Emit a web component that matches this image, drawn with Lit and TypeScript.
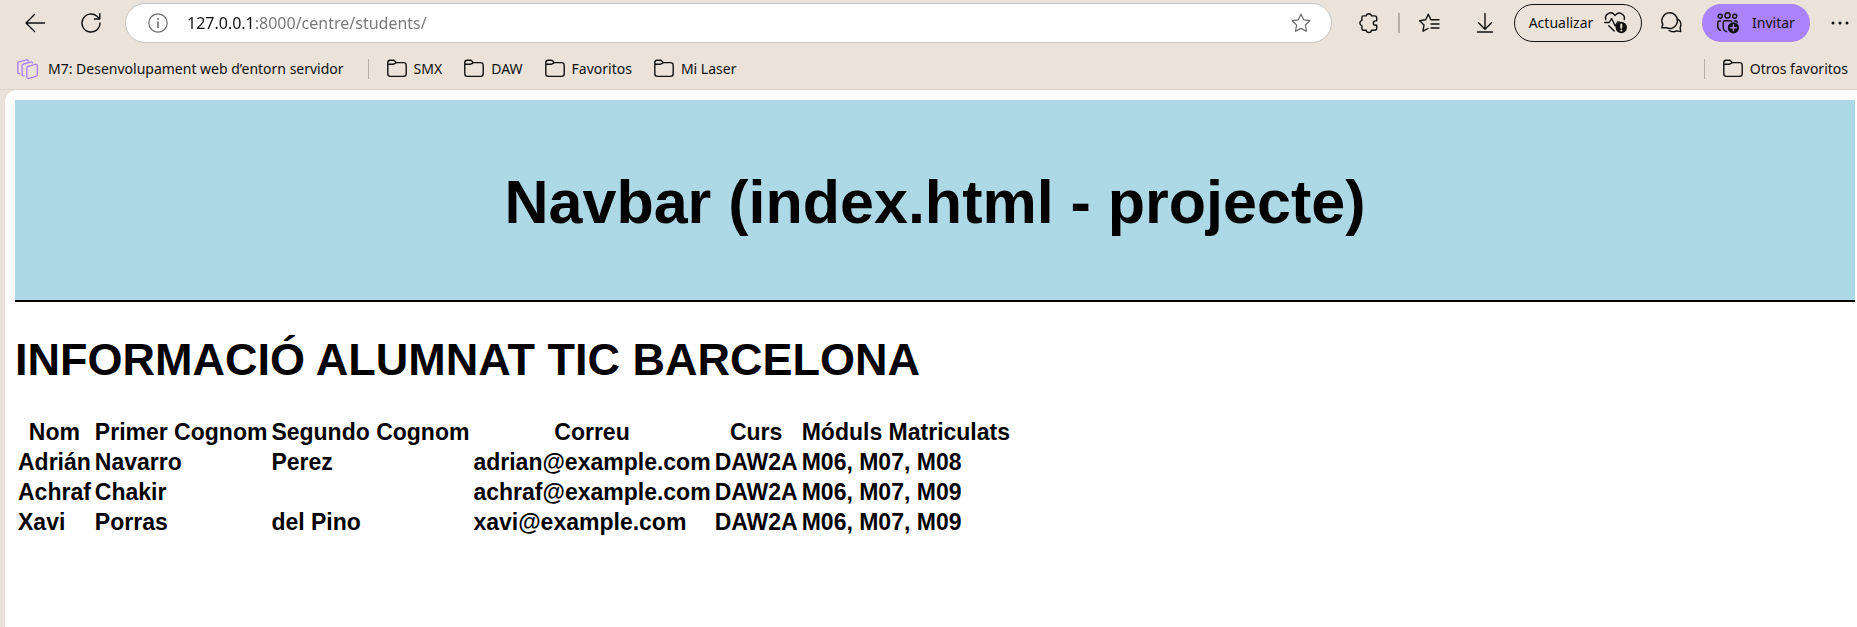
import { LitElement, html, css, svg } from "lit";
import { customElement } from "lit/decorators.js";

const folder = html`<svg class="icon" viewBox="0 0 20 20" aria-hidden="true">
  <path d="M.8 4.200v10.600a2.600 2.600 0 0 0 2.600 2.600h13.200a2.600 2.600 0 0 0 2.600-2.600V6.200a2.600 2.600 0 0 0-2.600-2.600H9.200L7.600 1.800a2 2 0 0 0-1.400-.6H3.200A2.400 2.400 0 0 0 .8 3.600zM.8 5.200h5.600a2 2 0 0 0 1.400-.6l1.400-1"/>
</svg>`;

const starPath = "M10 1.200l2.700 5.600 6.100.9-4.400 4.300 1.100 6.200L10 15.400l-5.500 2.800 1.100-6.200L1.200 7.700l6.100-.9z";

const icons = {
  back: svg`<path d="M19.500 10H1M9.500 1.500L1 10l8.500 8.500"/>`,
  reload: svg`<path d="M19 10a9 9 0 1 1-3-6.700L18.600 6M18.800 .6V6H13.400"/>`,
  info: svg`<circle cx="10" cy="10" r="9.200"/><path d="M10 9v5.500M10 5.600v.6" stroke-width="1.600"/>`,
  star: svg`<path d=${starPath}/>`,
  puzzle: svg`<path d="M7.200 2.900a2.700 2.700 0 0 1 5.300 0h3.200a2 2 0 0 1 2 2v3h-1.200a2.200 2.200 0 0 0 0 4.400h1.200v3a2 2 0 0 1-2 2h-3.200a2.700 2.700 0 0 1-5.300 0H4.400a1.500 1.500 0 0 1-1.500-1.500v-3a2.800 2.800 0 0 1 0-5.400v-3a1.500 1.500 0 0 1 1.500-1.500z"/>`,
  favorites: svg`<path d="M12.500 6.800h-.6L9.300 1.200 6.700 6.800l-6 .9L5 12l-1 6.200 5-2.700M12.500 6.800H20M12 11h8M12 15h8"/>`,
  download: svg`<path d="M10 .5V16M3.500 9.800l6.500 6.500 6.500-6.500M2.500 19h15"/>`,
  chat: svg`<path d="M.8 14.800l1-3.500a7.800 7.800 0 1 1 3.400 3.300zM17.600 6.600a7.200 7.200 0 0 1 1.500 8.200l.7 3.800-4.100-.7a8 8 0 0 1-7.600-.4"/>`,
};

const students = [
  ["Adrián", "Navarro", "Perez", "adrian@example.com", "DAW2A", "M06, M07, M08"],
  ["Achraf", "Chakir", "", "achraf@example.com", "DAW2A", "M06, M07, M09"],
  ["Xavi", "Porras", "del Pino", "xavi@example.com", "DAW2A", "M06, M07, M09"],
];
const columns = ["Nom", "Primer Cognom", "Segundo Cognom", "Correu", "Curs", "Móduls Matriculats"];

@customElement("app-root")
export class AppRoot extends LitElement {
  static styles = css`
    :host {
      display: flex;
      flex-direction: column;
      min-height: 100vh;
      background: #ebe2d9;
      color: #111;
      font: 14px/20px "Noto Sans", "Open Sans", sans-serif;
    }
    button {
      font: inherit;
      color: inherit;
      background: none;
      border: 0;
      padding: 0;
      cursor: pointer;
    }
    .icon {
      display: block;
      width: 20px;
      height: 20px;
      flex: none;
      fill: none;
      stroke: currentColor;
      stroke-width: 1.4;
      stroke-linecap: round;
      stroke-linejoin: round;
      overflow: visible;
    }
    .icon.wide {
      width: 23px;
      height: 22px;
    }
    .solid {
      fill: #111;
      stroke: none;
    }
    .toolbar {
      display: flex;
      align-items: center;
      gap: 2px;
      padding: 3px 0 0 8px;
    }
    .tool {
      width: 54px;
      height: 38px;
      flex: none;
      display: grid;
      place-items: center;
    }
    .more {
      width: 45px;
      justify-content: end;
      padding-right: 7px;
    }
    .address {
      flex: 1;
      min-width: 0;
      display: flex;
      align-items: center;
      box-sizing: border-box;
      height: 40px;
      margin: 0 8px 0 5px;
      padding: 0 20px 0 22px;
      background: #fff;
      border: 1px solid #c6c6c6;
      border-radius: 20px;
      color: #6b6b6b;
    }
    .address .icon {
      stroke-width: 1.2;
    }
    .url {
      flex: 1;
      min-width: 0;
      height: 24px;
      margin: 0 19px;
      padding: 0;
      border: 0;
      outline: 0;
      font: 16px/24px "Noto Sans", "Open Sans", sans-serif;
      background: linear-gradient(90deg, #111 67px, #767676 67px);
      -webkit-background-clip: text;
      background-clip: text;
      color: transparent;
    }
    .split {
      width: 2px;
      height: 20px;
      background: #b8afa7;
    }
    .pill {
      display: flex;
      align-items: center;
      justify-content: center;
      box-sizing: border-box;
      height: 38px;
      border-radius: 19px;
      flex: none;
    }
    .update {
      width: 128px;
      gap: 11px;
      border: 1px solid #111;
    }
    .invite {
      width: 108px;
      margin-left: 2px;
      gap: 12px;
      background: #ab82ff;
    }
    .update .mark {
      stroke: #ebe2d9;
      stroke-width: 2;
    }
    .invite .mark {
      stroke: #ab82ff;
    }
    .bookmarks {
      display: flex;
      align-items: center;
      height: 40px;
      padding: 6px 9px 0 17px;
      gap: 22px;
      border-bottom: 1px solid #ddd4cc;
    }
    .bookmark {
      display: flex;
      align-items: center;
      gap: 7px;
      color: inherit;
      text-decoration: none;
      white-space: nowrap;
    }
    .course {
      gap: 10px;
    }
    .course .icon {
      color: #ab82f4;
      width: 21px;
    }
    .line {
      width: 1px;
      height: 20px;
      background: #b8afa7;
    }
    .bookmarks > .line {
      margin: 0 -4px 0 2px;
    }
    .other {
      margin-left: auto;
      display: flex;
      align-items: center;
      gap: 18px;
    }
    .page {
      flex: 1;
      margin-left: 5px;
      padding: 10px 2px 0 10px;
      background: #fff;
      border-top-left-radius: 12px;
      color: #000;
      font-family: "Arial Rounded MT Bold", "Liberation Sans", Arial, sans-serif;
      font-weight: 700;
      font-size: 23px;
      line-height: 26px;
    }
    .banner {
      box-sizing: border-box;
      display: grid;
      place-items: center;
      height: 202px;
      padding-top: 4px;
      background: #add8e6;
      border-bottom: 2px solid #000;
    }
    .banner h1 {
      margin: 0;
      font-size: 61px;
      line-height: 70px;
    }
    h2 {
      margin: 31px 0 29px;
      font-size: 45px;
      line-height: 54px;
    }
    table {
      border-collapse: separate;
      border-spacing: 2px;
    }
    th,
    td {
      padding: 1px;
      text-align: left;
      white-space: nowrap;
    }
    th {
      text-align: center;
    }
  `;

  private tool(label: string, icon: unknown) {
    return html`<button class="tool" aria-label=${label}><svg class="icon" viewBox="0 0 20 20">${icon}</svg></button>`;
  }

  private bookmark(label: string) {
    return html`<a class="bookmark" href="#">${folder}${label}</a>`;
  }

  render() {
    return html`
      <div class="toolbar">
        ${this.tool("Atrás", icons.back)} ${this.tool("Actualizar página", icons.reload)}
        <div class="address">
          <svg class="icon" viewBox="0 0 20 20" aria-hidden="true">${icons.info}</svg>
          <input class="url" aria-label="Dirección" value="127.0.0.1:8000/centre/students/" />
          <button aria-label="Agregar a favoritos"><svg class="icon" viewBox="0 0 20 20">${icons.star}</svg></button>
        </div>
        ${this.tool("Extensiones", icons.puzzle)}
        <span class="split"></span>
        ${this.tool("Favoritos", icons.favorites)} ${this.tool("Descargas", icons.download)}
        <button class="pill update">
          Actualizar
          <svg class="icon wide" viewBox="0 0 23 22" aria-hidden="true">
            <path d="M1.800 7.500a5 5 0 0 1 8.700-4.600l.5.600.6-.6a5 5 0 0 1 8.600 4.600M.8 10.500h4.400l2.400-4 3.600 7.500 2.400-4h1.600M4.800 13.800l5.400 5.200" />
            <circle class="solid" cx="17.300" cy="15.500" r="5.700" />
            <path class="mark" d="M17.300 12.600v3.200M17.300 18.400v.1" />
          </svg>
        </button>
        ${this.tool("Comentarios", icons.chat)}
        <button class="pill invite">
          <svg class="icon wide" viewBox="0 0 23 22" aria-hidden="true">
            <circle cx="3.200" cy="4.200" r="2" />
            <circle cx="10.500" cy="3.400" r="2.600" />
            <circle cx="17.800" cy="4.200" r="2" />
            <path d="M3.600 9H2.200A1.400 1.400 0 0 0 .8 10.400v4.200a4 4 0 0 0 2.600 3.700M9.600 19.600A4.600 4.600 0 0 1 6.200 15.200v-4.800A1.600 1.600 0 0 1 7.800 8.800h5.400a1.600 1.600 0 0 1 1.500 1M17.400 9h1.400a1.400 1.400 0 0 1 1.400 1.400" />
            <circle class="solid" cx="16.400" cy="15.800" r="5.600" />
            <path class="mark" d="M13.400 15.800h6M16.400 12.800v6" />
          </svg>
          Invitar
        </button>
        <button class="tool more" aria-label="Más opciones">
          <svg class="icon" viewBox="0 0 20 20"><path d="M3 10h0M10 10h0M17 10h0" stroke-width="3" /></svg>
        </button>
      </div>
      <nav class="bookmarks">
        <a class="bookmark course" href="#">
          <svg class="icon" viewBox="0 0 21 20" aria-hidden="true">
            <path d="M11.300 7.300l7-2a1.500 1.500 0 0 1 2 1.500v8.600a2 2 0 0 1-1.500 2l-7 2a1.500 1.500 0 0 1-2-1.500V9.300a2 2 0 0 1 1.500-2zM7 16.800a1.500 1.500 0 0 1-1.900-1.400V7a2 2 0 0 1 1.500-2l7-2a1.500 1.500 0 0 1 1.900 1M2.800 14.600A1.500 1.500 0 0 1 .8 13.200V4.800a2 2 0 0 1 1.500-2l7-2a1.500 1.500 0 0 1 1.900 1" />
          </svg>
          M7: Desenvolupament web d’entorn servidor
        </a>
        <span class="line"></span>
        ${["SMX", "DAW", "Favoritos", "Mi Laser"].map((l) => this.bookmark(l))}
        <div class="other"><span class="line"></span>${this.bookmark("Otros favoritos")}</div>
      </nav>
      <main class="page">
        <header class="banner"><h1>Navbar (index.html - projecte)</h1></header>
        <h2>INFORMACIÓ ALUMNAT TIC BARCELONA</h2>
        <table>
          <thead><tr>${columns.map((c) => html`<th scope="col">${c}</th>`)}</tr></thead>
          <tbody>${students.map((row) => html`<tr>${row.map((v) => html`<td>${v}</td>`)}</tr>`)}</tbody>
        </table>
      </main>
    `;
  }
}
